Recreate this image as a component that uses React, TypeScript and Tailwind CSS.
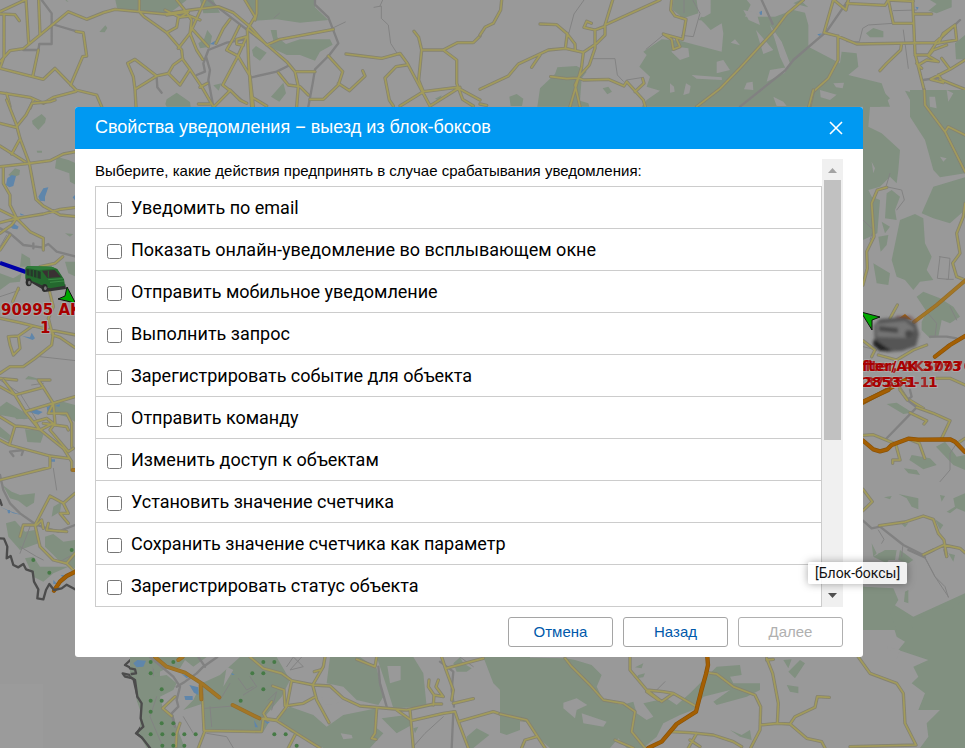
import { useState } from "react";

type Tile = {
  x: number;
  y: number;
  forest?: string;
  clearing?: string;
  water?: string;
  rail?: string;
  lane?: string;
  road?: string;
  primary?: string;
  highway?: string;
  border?: string;
  trees?: [number, number][];
};

/* Each tile is drawn on its own grid, three units to a map pixel. */
const tiles: Tile[] = [
  {
    x: 0,
    y: 0,
    forest:
      "M346 0L352 28L430 32L500 45L535 20L560 0ZM600 0L610 40L660 38L640 0ZM735 0L765 62L830 58L900 68L985 60L945 22V0ZM298 96L316 76L322 84L314 97ZM496 312L500 298L530 278L570 306L572 320H500ZM756 150L768 138L800 158L780 182L760 168ZM812 90H830L832 112L858 132L900 118L990 118L998 134L960 155L945 182L900 165L860 165L808 140L820 120ZM813 290L850 248L858 280L838 305ZM640 256L664 250L656 272ZM595 130L612 118L622 90L636 108L630 140L600 145ZM200 0L206 6L196 2ZM1305 296L1325 286L1318 302Z",
    water: "M630 132L645 122L642 134Z",
    rail:
      "M125 0L155 40V132H118L115 150H70M155 72L230 94M625 0L690 50L742 90L800 132M945 0V14L985 52L1015 130L988 165L945 208L938 250L925 320M735 118L680 128L625 150L618 170L630 210L625 240L640 320M625 150L610 190L615 215L590 225M755 232L830 215L870 195M470 232L472 262L485 278M690 270L730 305",
    lane: "M990 88L1036 66M1122 22L1144 18V55L1165 75L1172 130L1190 158M838 40L822 54M1140 18L1148 0",
    road:
      "M0 42L45 44L58 62M12 45V170L0 205M0 185L30 152L70 146L120 105L205 35L260 58L310 38L345 28L430 36L495 42L570 30L655 20L700 38L750 80L800 135L840 118L1000 88M78 0L86 130M116 0L120 105M0 35L75 0M0 205L130 238L165 205L228 270L290 285L305 320M228 94L250 98L260 168L248 170L212 255M115 150L98 230M0 278L90 292L130 310L160 292L228 274M20 280L30 320M90 325L100 300M418 0V35L432 50L500 98L545 150L548 178L570 208L605 260L640 320M500 98L530 82L535 52L570 48L600 60M530 0L550 25L575 60L570 100L535 145M615 0L570 100L590 150L608 178M575 85L625 140M383 190L405 178L470 228L405 268L408 320M383 190L400 230L405 268M470 228L505 220L520 195L548 175M505 220L540 255L570 208M690 58L670 85L648 130M718 78L700 115L680 150L714 168L740 110L710 118V132L730 136M714 168L668 255L690 272L642 320M714 168L750 228L760 320M690 270L720 300L740 310M735 0L765 50L742 88L746 190L755 320M770 0V40L765 60M745 88L790 125L860 185L885 215L895 260L890 320M890 215H945M835 218L865 255L900 260L925 285M985 168L1028 215L1015 255L970 298H930M1015 250L1048 272L1095 228L1088 212M1038 162L1145 175L1200 160L1222 190L1290 318M1242 94L1256 112L1265 150H1330L1372 128H1420L1440 108M1265 150L1256 240L1270 275L1370 262L1440 300M1330 150L1370 180V250L1388 298L1420 318M1220 195L1188 200L1155 234L1168 300L1180 318M1200 318L1270 275M1290 318L1380 262M595 312H630M760 294L800 318M600 262L622 250M495 30L540 52L565 36L500 45",
  },
  {
    x: 480,
    y: 0,
    forest:
      "M580 0H650L655 40L610 55L578 30ZM692 0H800L812 14L795 50H885L940 30L975 38L985 75V140L1080 190L1085 155L1130 160L1135 200L1105 225L1205 250L1230 320H485L500 300L540 272L500 260L510 230L478 200L500 165L490 155L545 118L600 122L725 155L730 100L725 70L692 90L672 68L660 58L692 40ZM940 10L960 0L985 22ZM172 320L180 265L225 222L232 202L290 198L320 215L305 235L300 302L325 310L328 320ZM88 290L110 282L130 296L126 318H92ZM368 265L385 260L396 275L382 283ZM1158 100L1180 84L1210 94V112L1170 112ZM1345 32L1370 12L1350 0H1415V22L1370 40ZM1425 130L1455 105V178H1428ZM1275 272L1330 285L1340 318H1300ZM1350 290L1370 272L1455 270V318H1370ZM655 60L664 50L678 54L675 62Z",
    clearing:
      "M574 155L592 140L625 145L628 170L600 180ZM570 250L582 260L584 275L570 278ZM618 250L632 258L628 280L610 285ZM635 225L725 232L726 240L650 236ZM710 185L730 180L750 210L710 220ZM752 128L765 118L780 136ZM828 90L880 150L850 162ZM870 75L905 125L930 190L920 212L900 170L885 120ZM800 248L818 245L820 270L792 268ZM870 210L920 202L915 218L860 245ZM880 290L910 305L920 318H890ZM1060 250L1092 248L1088 265L1068 262ZM1020 270L1070 284L1050 300L1022 292ZM790 30L830 40L840 75L806 60Z",
    water: "M838 36L846 32V44H840ZM1306 20L1316 22L1312 30ZM1012 103L1026 100L1018 108Z",
    rail: "M845 0L878 72M780 320L915 212L940 180L1040 94L1105 0M1330 240L1380 232M1370 128L1440 60",
    lane:
      "M312 0L282 42L265 105M335 176H405L412 225L430 244M612 0V38M638 0L660 40L640 110L605 106M498 148L550 105M1100 125H1138L1148 85L1165 75L1240 70H1300M1240 32L1310 30M1270 90L1285 205M440 240L490 232",
    road:
      "M65 0L62 30L40 70L15 82L0 105M180 72L230 74L260 100L285 132L286 152M262 100L256 145M0 268L85 228L115 192L205 150L256 145L310 157L350 130L375 105V75L398 0M155 202L180 165M310 157L305 200L270 320M345 145L328 195L295 232L285 255L300 320M375 75L540 0M345 145V90L312 82L320 64L334 70M345 90L372 80M212 230L260 236L295 234L310 240L385 238L432 258L440 245L490 300L496 320M465 275L492 250L488 236M0 312L20 316M575 0L572 30L585 48L618 58L608 118L550 102L575 118L580 148L600 140L590 118M650 320L720 266L780 204L880 95L920 42L970 0M1060 0L1032 98L1072 108L1130 132L1365 128L1425 75M1062 0L1098 30L1105 0M1100 10L1215 16L1225 0L1300 4M1225 0L1240 70H1300M1298 0L1305 160L1345 320M1300 42H1355M1074 108V180L1045 235L1000 275L990 318M1265 130L1262 150L1220 190L1200 212M1305 165H1345L1368 130L1430 120L1425 75L1390 100L1375 130M1315 195L1340 180L1375 185L1345 168L1360 150L1400 135M1385 175L1410 208L1352 238L1390 248L1375 225M1410 208L1455 180M1380 238L1455 268M1310 190L1325 205",
  },
  {
    x: 0,
    y: 100,
    forest:
      "M96 62L125 42L138 55L135 68L115 90L98 72ZM110 152H126V158H112ZM165 205L170 170L205 180L228 190V255L210 245L208 220ZM25 225L45 205L60 210L58 225L38 232ZM65 460L90 475L92 500L60 500ZM0 520L40 535L65 520L60 545L30 548L0 570ZM195 485H228V530L205 520ZM75 838L85 828L110 835L125 840ZM195 400L210 410L220 402Z",
    water:
      "M18 255L22 235L35 225L48 228L40 258L28 262ZM115 290L130 265L145 262L135 290V304L120 302ZM218 292L226 284V302ZM28 378L40 370L56 380L52 388L38 386ZM60 340L75 346L62 346ZM66 708L90 712L95 698L105 715L98 720Z",
    rail: "M0 385L30 400L70 435L125 442L145 432L170 455L228 470M100 430V445",
    lane: "M20 405L0 440M0 590L60 570M120 770L228 782",
    road:
      "M20 0L48 70L60 115L88 190L108 298L130 318L180 345L228 350M0 70L48 82L78 45L96 10L150 5L165 0M0 138L75 185M58 120L35 162M0 200L88 190L150 182L190 162L228 155M10 200V250L30 285V315L50 355L90 395L130 415V450M0 368L50 355L130 342L180 328L228 322M0 330L50 355L35 375L0 400M30 405L0 450M55 565L38 605M0 655L60 668L150 690L228 705M145 560L160 620L145 655L158 705L180 712L228 745M188 470L165 490L120 500M0 820L30 800L70 800L105 775L155 735L160 700M30 735L25 710L55 708L60 745L40 765L30 735M55 708L95 680M0 835L50 840",
  },
  {
    x: 0,
    y: 380,
    forest:
      "M0 80L20 65L70 95L72 112L95 115L72 118L0 105ZM10 82L25 70L45 85L80 100L82 115L50 118ZM75 148L120 152L130 165L122 188L82 186ZM8 315L35 335L60 345L105 340L102 368L80 382L55 362L30 355ZM18 430L45 422L75 455L105 450L115 490L60 510L25 470ZM170 60L225 75V125L200 110L155 100ZM135 470L160 462L190 485L225 480V565L185 550L135 500ZM75 535L100 530L120 560L205 560L160 580L130 605L100 590ZM0 140L30 165L28 185L0 170ZM160 380L185 365L180 395L155 410ZM395 850L480 830V1104H440L415 1060L430 1030L415 930L395 880Z",
    clearing: "M425 890L460 900L470 960L450 950ZM430 1000L475 1020L460 1050Z",
    water:
      "M78 94L105 88L128 96L115 104ZM140 80L160 75L158 105L143 100ZM165 78L180 72L178 80ZM0 380L35 395L65 405L40 400ZM160 600L172 612H160ZM182 585H195L190 595ZM415 840L440 842V855L400 865ZM152 238H165V245H152ZM22 390H30V400H24Z",
    rail: "M0 285L10 330L30 370L60 400L110 435L175 455L225 435M40 228L30 215L70 210L65 225",
    lane:
      "M95 15L130 10M0 0L60 40L110 120M160 265L170 330M60 500L110 530L130 540M90 440L60 520M430 900L440 960L430 1050M460 860V1100M225 520L180 545",
    road:
      "M10 0L45 45L75 95L115 145L190 205L215 245V270M0 20L45 45L130 22L160 70L165 130L150 150L205 215L220 205M130 22L115 0L150 0M75 95L225 50M160 70L145 100L200 100L215 130V200M105 125L140 115L160 130L120 150L105 125M130 130L200 140L205 150M0 110L45 138L70 140L125 150M45 138L28 195L0 180M28 195L150 228L205 235M150 228V262L0 300M60 470L70 435H105L150 348L190 370L225 340M105 435L120 500L160 540L200 550L225 520M190 370L205 400L180 400L205 430M110 435L125 420L130 445M145 430L140 450L200 455M200 550L225 575",
    primary: "M218 270H228M455 832L480 838",
    highway: "M162 632L180 605L200 588L228 574",
    border:
      "M0 475L12 476L22 500L20 535L32 528L40 555L55 562L70 552L78 568L98 575L102 605L115 628L112 655L130 658L138 630L148 612L162 630L185 625L200 614L225 628M400 832L375 855L395 865L410 880L395 886L368 880L375 890L400 895L415 960L425 985L430 1030L410 1060L435 1080L450 1104M0 360L5 375",
    trees: [
      [100, 540],
      [148, 578],
      [215, 510],
      [455, 845],
      [452, 965],
      [452, 1062],
    ],
  },
  {
    x: 130,
    y: 600,
    forest:
      "M0 171H230L190 200L165 180L150 205L120 200L80 220L60 190L45 215L75 230L110 225L140 250L130 270L90 290L100 330L130 345L140 380L165 444H60L30 400V330L20 300V240L0 225ZM160 330L190 300L215 250L270 225L330 171H440L480 240L455 290L400 355L415 370L400 395L225 390L222 310ZM600 171H690L740 205L760 290L745 315L680 300L640 260L590 250ZM740 171H850L880 220L890 320L790 325L770 260L755 215ZM1060 171H1200V370L1165 360L1130 340L1120 280L1090 250ZM440 350L480 320L550 345L590 380L640 345L740 325L735 380L760 400L720 444H580L480 395ZM755 355L830 345L845 375L800 400ZM1010 410L1040 385L1078 405L1030 444H1010ZM970 190L990 172L1000 190L1025 205L1010 215H980ZM850 385L865 380L855 400Z",
    clearing: "M772 198H812V240L780 250ZM632 400L665 405L668 415L640 418ZM570 290L600 295L640 305L590 315ZM290 200L310 210L280 260Z",
    water:
      "M10 190L22 180L48 182L40 200L20 202ZM155 222L180 228L170 235ZM163 288H188V300H166ZM178 255L205 262V285L192 278ZM305 218L314 225H305ZM372 360L384 382H375ZM402 362L420 366L412 372Z",
    rail:
      "M60 171L130 230L150 260L140 300L145 320L125 340L135 380M140 260L165 245L200 220L220 200L262 171M205 171L225 200M745 200L750 250L770 320M970 335L965 444M930 185L970 215L965 270L972 320",
    lane:
      "M240 320L245 380M230 400L290 410L310 444M225 325L310 318M325 235L350 270L370 260M360 230L380 260L340 285M470 200L490 171L520 200L480 210L515 171M415 300L440 275L425 330M850 440L885 400L940 350M990 171L1030 200M80 290L60 350L100 444M300 250L270 300M190 400L160 350",
    road:
      "M360 171L400 205L455 220L485 242L550 255L600 258L640 295L690 318L830 330L912 312H935M585 171L580 200L548 255L560 300L597 368M553 215L570 210M485 242L470 320L440 360L400 355M428 258L462 270L465 318L520 310L553 292M425 305L400 340L412 360M390 355L440 362L500 400L570 444M495 405L475 444M400 355L395 395L225 392L205 444M215 250L222 392M135 290L98 325L125 348M150 370L140 400L138 440M680 178L735 200L740 171M740 325L735 400L725 415L738 418M800 330L845 362L940 340L975 335L985 365L1090 335L1160 358L1190 360L1200 372M840 330L850 444M935 171L948 210L970 270L965 300M948 205L1060 175M970 310L1030 296M897 240L895 260L912 285L940 290L918 260L925 240M912 285L910 315M985 365L1015 444",
    primary: "M75 171L110 200L165 218L215 250L268 292M308 315L388 355M145 180L158 171M212 255L214 298",
    border: "M0 232L15 240L22 290L35 310L32 355L40 380L18 400L35 412L60 444M0 205L15 208L18 220L5 222",
    trees: [
      [62, 186], [130, 186], [400, 186], [433, 186], [400, 220], [367, 220], [62, 220], [95, 268], [95, 302], [62, 302],
      [62, 335], [332, 302], [400, 268], [95, 370], [130, 370], [62, 403], [97, 403], [130, 403], [163, 403], [197, 403],
      [97, 437], [130, 437], [163, 437], [433, 403], [467, 403], [500, 437],
    ],
  },
  {
    x: 500,
    y: 550,
    forest:
      "M0 321L195 325L225 330L275 345L305 375L290 410L310 450L365 465L400 455L410 490L440 510L460 500L470 560L430 594H380L355 565L330 594H150L110 560L90 520L60 510V540L20 555L0 548ZM1090 110L1180 120L1175 160L1240 200L1395 130V594H1260L1285 560L1280 520L1320 480L1255 480L1275 430L1235 400L1255 380L1240 350L1285 330L1195 300L1215 275L1190 260L1170 195L1130 170L1125 200L1100 215L1090 210ZM1120 20L1155 0H1185L1160 40ZM1200 0L1240 30L1225 40L1195 30ZM430 460L500 445L530 465L570 430L600 400L620 380L650 350L720 345L725 375L690 380L700 400H780V420L740 440L650 465L640 455L690 420L610 440L580 480L540 495L490 520L470 560L460 500ZM415 375L435 370L430 382L408 385ZM865 365L900 330L915 340L885 385ZM860 405L895 410V430L870 425ZM690 540L725 555L750 540L755 570L720 560ZM405 352L430 340L425 355ZM850 330L875 328L865 355Z",
    clearing: "M190 458L230 445L262 465L230 480L225 505L190 475ZM245 490L320 515L310 530L250 520ZM1200 300L1160 290L1190 325Z",
    rail: "M1225 0L1275 22",
    lane: "M1275 22L1305 80L1345 140M495 395L470 420",
    road:
      "M195 325L215 350L270 405L310 450L370 460L405 485L395 545L435 594M390 321V360L440 420L485 455L520 430L590 470M440 420L490 425L520 430M440 425L475 450M0 492L80 510L135 594M110 560L75 570L65 594M345 570L400 594M620 368L650 372L700 410L765 435L782 470L780 540L752 594M510 545L570 548L640 555L700 575L725 590M590 550L565 594M570 570L600 590M800 325L818 370L835 460L832 520M780 525L832 520L870 522L920 565L965 575L975 594M870 522L885 500L945 472L952 440L988 442M1075 321L1110 370L1190 400L1210 430L1215 520L1248 585L1050 590M1270 15L1300 0M1335 0L1340 18M800 330L820 328",
    highway: "M622 321L624 345L618 372L604 422L588 485L530 522L485 575L445 594",
  },
  {
    x: 790,
    y: 90,
    forest:
      "M219 0H275L300 25L270 50H240L235 110L275 130L330 180L325 240L320 280L300 260L270 290L235 300L245 320L270 330L262 430L219 450ZM360 0H525V250L450 262L430 240L405 150L360 80ZM430 290L525 262V360L480 400L430 385L395 370ZM330 390L375 372L400 385L405 460L425 500L410 540L430 570L390 575L370 600L345 570L320 560L305 510ZM250 520L300 550L295 585L260 580ZM290 310L305 300L330 320L315 360L320 390L285 385ZM275 395L300 410L285 430ZM380 620L400 605L450 625L490 650L510 680L480 700L455 690L445 740L420 745L395 720V695L410 665ZM265 440L295 435L290 465L272 485Z",
    clearing: "M418 20L435 20L440 55L420 50ZM450 200L470 205L460 215ZM245 215L255 235L250 250ZM470 0L490 10L475 35Z",
    water: "M470 762H484L478 770Z",
    rail: "M420 740H470L500 745",
    lane:
      "M300 250L288 290L335 300L343 330L320 360M219 390L250 420L240 450M448 500L480 505L475 568L442 565L450 500M470 568H490M410 665L440 700L435 740M219 770L260 780M480 650L500 690",
    road:
      "M70 0L55 55M403 0L405 45L465 125L525 245M465 125L475 110L525 135M290 292L262 300L245 340L252 440L230 485L232 535L219 585M525 340L520 380L500 430L510 490L488 520L500 560L525 570M322 645L300 685M219 752L255 780L245 800M265 795L320 810L370 780L410 765M430 865L480 865L525 885M320 880L350 925L400 955",
    primary: "M372 696L440 645L525 572",
    highway: "M219 938L350 868M435 800L480 765L525 738",
  },
  {
    x: 790,
    y: 390,
    forest:
      "M290 42L320 38L368 68L340 72ZM438 170L465 155L485 180L500 200L525 195V240L490 225ZM365 195L420 205L440 225L400 238L358 210ZM342 235L380 240L390 255L355 250ZM325 312L385 325V358L365 350L350 325ZM282 322L305 318L300 328ZM450 315L465 318L455 335ZM470 365L495 350L490 325L525 310V365L500 355L480 370ZM245 460L260 490L250 500ZM265 490L320 480L315 510L270 510ZM219 590L310 595L325 630L300 670L320 720H219ZM345 605L355 600V640L342 635ZM355 685L400 680L430 655L480 660L525 628V720H370ZM435 388L460 405L450 420ZM475 490L495 495L490 515ZM335 402L355 400L345 412Z",
    rail: "M360 0L365 20L352 30L380 52L285 150M219 392L245 415L270 410L340 465L400 495",
    lane: "M265 420L282 448L275 460M338 470L335 500M400 495L435 560L465 590L475 622M500 160L480 190V240L450 275",
    road:
      "M330 0L352 30M380 52L430 70L480 92L455 145M360 68L410 92L402 102M219 136L250 134L312 160M318 165L330 210L308 210V220M358 148L388 160L404 205M500 162L525 145M219 298L247 335L219 362M268 407L345 396L400 378L430 388L445 430L462 450L470 500M400 494L462 465L510 475L525 488",
    highway: "M219 35L295 0M219 152L250 178L270 184L292 178L305 165L355 146L385 149L480 148L495 155L525 186",
  },
];

function MapTile({ t }: { t: Tile }) {
  return (
    <g transform={`translate(${t.x} ${t.y}) scale(0.33333)`} fill="none" strokeLinejoin="round" strokeLinecap="round">
      <path d={t.forest} fill="#819080" />
      <path d={t.clearing} fill="#999" />
      <path d={t.water} fill="#5f86ab" />
      <path d={t.lane} stroke="#838383" strokeWidth="3" />
      <path d={t.rail} stroke="#818181" strokeWidth="7" />
      <path d={t.road} stroke="#858371" strokeWidth="10" />
      <path d={t.road} stroke="#a29b5b" strokeWidth="5" />
      <path d={t.primary} stroke="#936c2b" strokeWidth="12" />
      <path d={t.primary} stroke="#a37726" strokeWidth="8" />
      <path d={t.highway} stroke="#8a5207" strokeWidth="13" />
      <path d={t.highway} stroke="#a45f02" strokeWidth="9" />
      <path d={t.border} stroke="#4c4c4c" strokeWidth="7" />
      {t.trees?.map(([cx, cy]) => (
        <circle key={`${cx}-${cy}`} cx={cx} cy={cy} r="6" fill="#467a46" />
      ))}
    </g>
  );
}

function MapBackground() {
  return (
    <svg
      className="absolute inset-0 h-full w-full"
      viewBox="0 0 965 748"
      preserveAspectRatio="xMidYMid slice"
      aria-hidden="true"
    >
      <defs>
        <filter id="smudge" x="-20%" y="-20%" width="140%" height="140%">
          <feGaussianBlur stdDeviation="1.4" />
        </filter>
      </defs>
      <rect width="965" height="748" fill="#999" />
      {tiles.map((t) => (
        <MapTile key={`${t.x}-${t.y}`} t={t} />
      ))}
      <path d="M0 684H43V748H0Z" fill="#9d9d9d" opacity="0.5" />

      {/* green van with its track and heading arrow */}
      <path d="M0 263L26 272" stroke="#0000a8" strokeWidth="4" />
      <path d="M58 299L65 296L67 287L76 304L71 302Z" fill="#00a800" stroke="#111" strokeWidth="1" />
      <g transform="translate(0 245) scale(0.33333)">
        <path d="M75 102L85 95L140 128L196 118L198 132L140 140Z" fill="#333" />
        <path d="M76 68L82 63L155 65L172 72L192 103L195 122L150 130L130 122L95 108L76 100Z" fill="#24692e" />
        <path d="M82 63L155 65L168 71L115 75L78 68Z" fill="#2f7d3a" />
        <path d="M126 77L164 75L183 96L142 99Z" fill="#3a3033" />
        <path d="M79 72L108 76L122 80V102L80 90Z" fill="#26372b" />
        <path d="M90 72V94M100 75V97M111 76V101M145 77V98" stroke="#24692e" strokeWidth="3" />
        <path d="M145 104L188 101M150 112L192 108" stroke="#3b8b45" strokeWidth="3" />
        <ellipse cx="86" cy="112" rx="9" ry="12" fill="#2b2b2b" />
        <ellipse cx="88" cy="113" rx="4" ry="6" fill="#777" />
        <ellipse cx="134" cy="129" rx="9" ry="12" fill="#2b2b2b" />
        <ellipse cx="136" cy="130" rx="4" ry="6" fill="#777" />
      </g>

      {/* stacked grey vehicles */}
      <path d="M899 318L905 314L912 320Z" fill="#a45f02" />
      <g filter="url(#smudge)">
        <path d="M874 325L880 319L905 317L916 324L919 334L916 346L902 351L886 352L875 345Z" fill="#555" />
        <path d="M876 324L905 321L914 328L912 338L877 337Z" fill="#747474" />
        <path d="M879 326L898 328V333L879 331Z" fill="#484848" />
        <path d="M874 339L884 346L892 351L880 351L873 345Z" fill="#222" />
        <circle cx="909" cy="334" r="4" fill="#494949" />
        <path d="M896 317H910L917 323" stroke="#6b4547" strokeWidth="1.5" fill="none" />
      </g>
      <path d="M861 312L880 317L872 320V330Z" fill="#00a800" stroke="#111" strokeWidth="1" />

      <g
        fontFamily="'DejaVu Sans', 'Noto Sans', sans-serif"
        fontWeight="bold"
        fontSize="14"
        fill="#a80000"
        stroke="#aaa"
        strokeWidth="2"
        paintOrder="stroke"
      >
        <text x="1" y="315" fontSize="15">90995 AK</text>
        <text x="40" y="333" fontSize="15">1</text>
        <text x="862" y="371">fter/AK 3773</text>
        <text x="865" y="371" strokeWidth="0" opacity="0.75">fter, AKS0976</text>
        <text x="862" y="387">2853-1</text>
        <text x="865" y="387" strokeWidth="0" opacity="0.75">37353-1</text>
        <text x="928" y="387">1</text>
      </g>
    </svg>
  );
}

const actions = [
  "Уведомить по email",
  "Показать онлайн-уведомление во всплывающем окне",
  "Отправить мобильное уведомление",
  "Выполнить запрос",
  "Зарегистрировать событие для объекта",
  "Отправить команду",
  "Изменить доступ к объектам",
  "Установить значение счетчика",
  "Сохранить значение счетчика как параметр",
  "Зарегистрировать статус объекта",
];

function ScrollBar() {
  return (
    <div className="flex w-[21px] shrink-0 flex-col items-center bg-[#f0f0f0]" aria-hidden="true">
      <svg className="h-[21px] w-[21px] shrink-0" viewBox="0 0 21 21">
        <path d="M6 14L10.500 9L15 14Z" fill="#a3a3a3" />
      </svg>
      <div className="h-[260px] w-[17px] bg-[#c1c1c1]" />
      <svg className="mt-auto h-[21px] w-[21px] shrink-0" viewBox="0 0 21 21">
        <path d="M6 7L10.500 12L15 7Z" fill="#505050" />
      </svg>
    </div>
  );
}

const buttonClass =
  "h-[30px] w-[105px] rounded-[3px] border border-[#a5a5a5] bg-white text-[15px] leading-5 text-[#0059ab] disabled:border-[#b0b0b0] disabled:text-[#b0b0b0]";

export default function App() {
  const [checked, setChecked] = useState<Record<string, boolean>>({});

  return (
    <main className="relative min-h-screen overflow-hidden bg-[#999] font-['Liberation_Sans',Arial,sans-serif]">
      <MapBackground />

      <section
        role="dialog"
        aria-labelledby="dialog-title"
        className="absolute top-[107px] left-[75px] flex w-[788px] flex-col overflow-hidden rounded-[3px] bg-white"
      >
        <header className="flex h-[42px] items-center justify-between bg-[#0099f2] px-5">
          <h1 id="dialog-title" className="pb-0.5 text-[18px] leading-5 text-white">
            Свойства уведомления − выезд из блок-боксов
          </h1>
          <button type="button" aria-label="Закрыть" className="flex text-white">
            <svg className="h-[14px] w-[14px]" viewBox="0 0 14 14" stroke="currentColor" strokeWidth="1.6" fill="none">
              <path d="M1 1L13 13M13 1L1 13" />
            </svg>
          </button>
        </header>

        <div className="mx-5 mt-2.5 flex">
          <fieldset className="min-w-0 flex-1">
            <legend className="h-[27px] text-[15px] leading-[23px] text-black">
              Выберите, какие действия предпринять в случае срабатывания уведомления:
            </legend>
            <ul className="border border-b-0 border-[#ccc] font-[Roboto,sans-serif]">
              {actions.map((action) => (
                <li key={action} className="border-b border-[#ccc]">
                  <label className="flex h-[41px] items-center gap-[9px] pl-[11px] text-[18px] leading-6 text-black">
                    <input
                      type="checkbox"
                      className="mt-1 h-[15px] w-[15px] shrink-0"
                      checked={!!checked[action]}
                      onChange={(e) => setChecked({ ...checked, [action]: e.target.checked })}
                    />
                    {action}
                  </label>
                </li>
              ))}
            </ul>
          </fieldset>
          <ScrollBar />
        </div>

        <footer className="flex justify-end gap-2.5 px-5 py-2.5">
          <button type="button" className={buttonClass}>
            Отмена
          </button>
          <button type="button" className={buttonClass}>
            Назад
          </button>
          <button type="button" disabled className={buttonClass}>
            Далее
          </button>
        </footer>
      </section>

      <div
        role="tooltip"
        className="absolute top-[562px] left-[808px] rounded-[2px] bg-white/85 px-[7px] font-[Roboto,sans-serif] text-[14px] leading-[22px] text-[#111] shadow-[0_0_8px_rgba(0,0,0,0.35)]"
      >
        [Блок-боксы]
      </div>
    </main>
  );
}
